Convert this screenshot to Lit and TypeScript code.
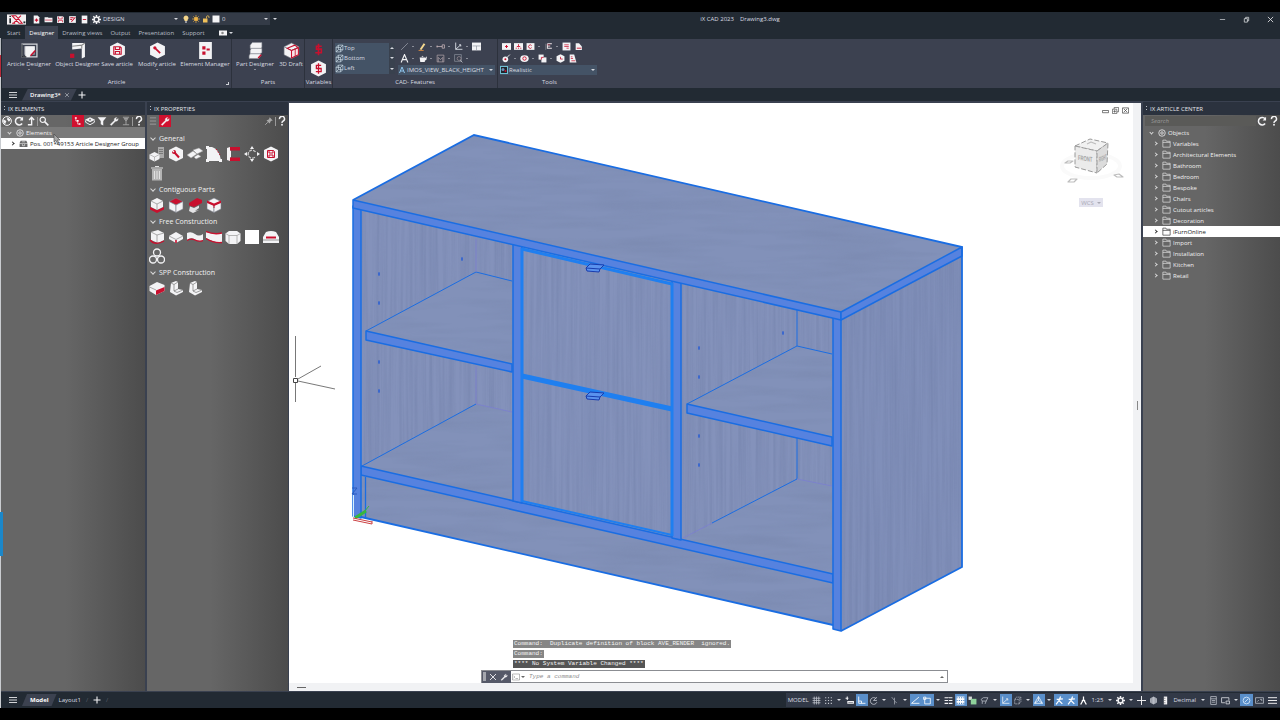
import { LitElement, html, svg, css, SVGTemplateResult, TemplateResult } from "lit";
import { customElement, property } from "lit/decorators.js";
import { classMap } from "lit/directives/class-map.js";

const RED = "#c8102e";
const W = "#f3f3f5";

const cube = (top = W, left = W, right = W) => svg`
  <path d="M8 1L15 4.500L8 8L1 4.500Z" fill=${top} stroke="#777b85" stroke-width=".6"/>
  <path d="M1 4.500L8 8V15.500L1 12Z" fill=${left} stroke="#777b85" stroke-width=".6"/>
  <path d="M15 4.500L8 8V15.500L15 12Z" fill=${right} stroke="#777b85" stroke-width=".6"/>`;
const hex = svg`<path d="M8 .5L15 4V12L8 15.500L1 12V4Z" fill=${W}/>`;
const wrench = (c: string) => svg`<path d="M2 13.500L8.500 7C8 4.500 9.500 2.500 12.500 2.500L10.800 4.500L11.500 6L13.500 5.200L14.500 4C15 7 13 8.800 10.300 8.300L3.700 15Z" fill=${c} stroke=${c} stroke-width=".6"/>`;
const floppy = svg`<path d="M4.500 4.500H10.500L11.500 5.500V11.500H4.500Z M6 4.500V7H10V4.500 M6 11.500V9H10V11.500" fill="none" stroke=${RED} stroke-width="1"/>`;
const page = svg`<path d="M3 1H10L13 4V15H3Z" fill=${W}/>`;
const iso = svg`<path d="M2 6H10V14H2ZM6 2H14V10H6ZM2 6L6 2M10 6L14 2M10 14L14 10M2 14L6 10" fill="none" stroke="#cfe0ea" stroke-width="1.200"/>`;

const ICONS: Record<string, SVGTemplateResult> = {
  new: svg`${page}<path d="M8 6V12M5 9H11" stroke=${RED} stroke-width="2"/>`,
  open: svg`<path d="M1 4H7L8 5H15V13H1Z" fill=${W}/><path d="M2 9H14" stroke=${RED} stroke-width="1.200"/>`,
  save: svg`<path d="M2 2H12L14 4V14H2Z" fill=${W}/><path d="M4.500 3V7H11V3M4.500 13V9.500H11.500V13" fill="none" stroke=${RED} stroke-width="1.200"/>`,
  saveas: svg`<path d="M2 2H14V14H2Z" fill=${W}/><path d="M4 5H10M4 8H7M6 12L13 4" stroke=${RED} stroke-width="1.800"/>`,
  plot: svg`<path d="M3 1H13V15H3Z" fill=${W}/><path d="M5 8H11" stroke=${RED} stroke-width="1.600"/>`,
  gear: svg`<path d="M8 0V16M0 8H16M2.300 2.300L13.700 13.700M13.700 2.300L2.300 13.700" stroke=${W} stroke-width="2.600"/><circle cx="8" cy="8" r="4.200" fill="#3b414c" stroke=${W} stroke-width="2.600"/>`,
  bulb: svg`<path d="M8 1A5 5 0 0 1 11 10V12H5V10A5 5 0 0 1 8 1Z" fill="#f4d58b"/><path d="M6 14H10" stroke=${W} stroke-width="2"/>`,
  sun: svg`<circle cx="8" cy="8" r="4" fill="#efb548"/><path d="M8 0V16M0 8H16M2.500 2.500L13.500 13.500M13.500 2.500L2.500 13.500" stroke="#efb548" stroke-width="1.300"/>`,
  lock: svg`<path d="M2 7H11V15H2Z" fill="#f0c15a"/><path d="M9 7V4A2.500 2.500 0 0 1 14 4V6" fill="none" stroke="#f0c15a" stroke-width="1.600"/>`,
  square: svg`<path d="M1 1H15V15H1Z" fill=${W}/>`,
  monitor: svg`<path d="M0 3H16V13H0Z" fill=${W}/><circle cx="7" cy="8" r="2.500" fill="#888"/>`,
  articleDesigner: svg`<path d="M1 2H15V14H1Z" fill="none" stroke="#d5d7dc" stroke-width="1.200"/><path d="M3 4H13V12H3Z" fill="#9a9da6"/><path d="M4 4H13V8L8 14H4Z" fill=${W}/><path d="M9 13L13.500 8" stroke=${RED} stroke-width="1.400"/><path d="M1 2V14H5" stroke="#1b1f26" fill="none"/>`,
  objectDesigner: svg`<path d="M3 1H15V14L12 15.500V6L3 7Z" fill=${W}/><path d="M3 4L12 3V6M12 3L15 1" fill="none" stroke="#888"/><path d="M1 11H5V15H1Z" fill=${RED}/>`,
  saveArticle: svg`${hex}${floppy}`,
  modify: svg`${hex}<path d="M5.500 5.500L10.500 10.500" stroke=${RED} stroke-width="1.600"/><circle cx="5.500" cy="5.500" r="1.500" fill=${RED}/>`,
  manager: svg`<path d="M2 0H14V16H2Z" fill=${W}/><path d="M5 4H8V7H5ZM5 9H8V12H5ZM9 6H12V8H9Z" fill=${RED}/>`,
  partDesigner: svg`<path d="M5 .5H14V5L13 6H3V3ZM4 6H14V10L12 11H3V8ZM3 11H13V13L11 15.500H2V13Z" fill=${W} stroke="#8a8d96" stroke-width=".5"/><path d="M10.500 15L13.500 12" stroke=${RED} stroke-width="1.400"/>`,
  draft: svg`${cube(W, W, "#f6e4e7")}<path d="M8 8L14.500 5.500V12L8 15ZM8 8L4 6L11 3L14.500 5.500" fill="none" stroke=${RED}/><path d="M11.500 6.500V13.500" stroke=${RED} stroke-width=".8"/>`,
  iso,
  line: svg`<path d="M2 14L14 2" stroke="#b9bdc7"/>`,
  pencil: svg`<path d="M3 13L10 2L13 4L6 14Z" fill="#f5d98f"/><path d="M1 15H10" stroke="#e28c3c" stroke-width="1.500"/>`,
  dim: svg`<path d="M1 8H11M2 6V10M11 5V11H15V5Z" stroke="#cdb9bd" fill="none" stroke-width="1.300"/>`,
  ucs: svg`<path d="M3 1V13H15M3 13L12 5M9 5H12V8" fill="none" stroke="#e4e8ef" stroke-width="1.500"/>`,
  table: svg`<path d="M0 1H16V15H0Z" fill=${W}/><path d="M1 7H15M8 7V15" stroke="#8e929c" stroke-width="1.200"/>`,
  letterA: svg`<path d="M2 15L8 1L14 15M4.500 10H11.500" fill="none" stroke=${W} stroke-width="2"/>`,
  teapot: svg`<path d="M3 6H13L12 14H4ZM13 7L16 4L15 10L12 12M3 8L0 6M6 5L8 3L10 5Z" fill=${W}/>`,
  render: svg`<path d="M2 2H14V14H2ZM4 14V6L8 10L12 6V14" fill="none" stroke="#b7a9ad" stroke-width="1.200"/>`,
  find: svg`<path d="M1 1H13V13H1Z" fill="none" stroke="#9fa4ae"/><circle cx="9" cy="8" r="3.500" fill="#3c414f" stroke="#b2a3a8"/><path d="M11 11L15 15" stroke=${W}/>`,
  tool1: svg`<path d="M0 2H16V14H0Z" fill=${W}/><path d="M8 5.500V10.500M5.500 8H10.500" stroke=${RED} stroke-width="1.800"/>`,
  tool2: svg`<path d="M0 2H16V14H0Z" fill=${W}/><path d="M8 4V7M3 11H5M7 11H9M11 11H13M5 8H11" stroke=${RED} stroke-width="1.600" fill="none"/>`,
  tool3: svg`<path d="M1 2H15V14H1Z" fill=${W}/><path d="M10 6.500A3 3 0 1 0 10 10" stroke=${RED} stroke-width="1.500" fill="none"/>`,
  tool4: svg`<path d="M3 3V14" stroke="#8e929c"/><path d="M6 3H14M6 7H11M6 11H14M6 3V12" stroke="#eee6ea" stroke-width="1.800" fill="none"/><path d="M6 5H11" stroke=${RED}/>`,
  tool5: svg`<path d="M1 1H15V15H1Z" fill=${W}/><path d="M4 5H12M4 8H12M8 11H12" stroke=${RED} stroke-width="1.300"/>`,
  tool6: svg`<path d="M3 2H9L14 8V14H3Z" fill=${W}/><path d="M5 11H13" stroke=${RED} stroke-width="1.600"/>`,
  bomb: svg`<circle cx="6" cy="9.500" r="5" fill=${W}/><circle cx="6" cy="9.500" r="1.800" fill=${RED}/><path d="M9 6L14 1" stroke=${W} stroke-width="1.600"/>`,
  eye: svg`<ellipse cx="8" cy="8" rx="7.500" ry="6" fill=${W}/><circle cx="8" cy="8" r="3" fill="none" stroke=${RED} stroke-width="1.600"/>`,
  copy: svg`<path d="M1 1H10V10H1Z" fill=${W}/><path d="M6 6H15V15H6Z" fill=${W}/><path d="M6 10V6H10" stroke=${RED} stroke-width="1.500" fill="none"/>`,
  clock: svg`${hex}<path d="M8 5V9H12" stroke=${RED} stroke-width="1.400" fill="none"/>`,
  sheet: svg`<path d="M3 1H11L15 15H3Z" fill=${W}/><path d="M5 5H8M5 8H9M6 12H13" stroke=${RED} stroke-width="1.300"/>`,
  realistic: svg`<path d="M0 0H16V16H0Z" fill="#6fc0d4"/><path d="M2 2H14V14H2Z" fill="#20252c"/><circle cx="6" cy="7" r="3" fill="#6d8fb8"/><circle cx="11" cy="10" r="2" fill=${RED}/>`,
  letterBlue: svg`<path d="M3 14L8 2L13 14M5 10H11" fill="none" stroke="#8fc6ee" stroke-width="2"/>`,
  globe: svg`<circle cx="8" cy="8" r="7" fill="none" stroke=${W} stroke-width="1.600"/><path d="M2 5L7 8L5 13L2 10ZM9 2L14 6L11 9L8 5Z" fill=${W}/>`,
  refresh: svg`<path d="M13 4.500A6 6 0 1 0 13 12" fill="none" stroke=${W} stroke-width="2.400"/><path d="M14.500 1V7H9Z" fill=${W}/>`,
  levelUp: svg`<path d="M3 14H9V3M5 6.500L9 2L13 6.500" fill="none" stroke=${W} stroke-width="2.200"/>`,
  search: svg`<circle cx="6" cy="6" r="4.300" fill="none" stroke=${W} stroke-width="1.800"/><path d="M9 9L15 15" stroke=${W} stroke-width="2.400"/>`,
  chain: svg`<path d="M3 2H6V4.500H3ZM6 6.500H9V9H6ZM9 11.500H12V14H9Z" fill="#fff"/><path d="M4.500 4V8H7M7.500 9V13H9" fill="none" stroke="#fff"/>`,
  layers: svg`<path d="M8 2L16 6L8 10L0 6Z" fill=${W}/><path d="M1 7V10L8 14L15 10V7" fill="none" stroke=${W} stroke-width="1.500"/><circle cx="8" cy="6" r="1.500" fill="#777"/>`,
  funnel: svg`<path d="M1 2H15L10 8V15L6 13V8Z" fill=${W}/>`,
  wrench: wrench(W),
  press: svg`<path d="M3 2H13M5 4H11L8 8ZM8 8V14M3 14H13" stroke="#a2a2a2" stroke-width="1.500" fill="#8a8a8a"/>`,
  help: svg`<path d="M4 5A4 4 0 1 1 9.500 8.300Q8 9 8 11" fill="none" stroke=${W} stroke-width="2.400"/><circle cx="8" cy="14" r="1.500" fill=${W}/>`,
  list: svg`<path d="M3 3H13M3 8H13M3 13H13" stroke="#999" stroke-width="1.600"/>`,
  pin: svg`<path d="M9 2L14 7L11 8L9 12L4 7L8 5Z" fill="#a9a9a9"/><path d="M6 10L2 14" stroke="#a9a9a9" stroke-width="1.500"/>`,
  gDuplicate: svg`<path d="M9 1H15V12H9Z" fill="#a9a9a9"/><path d="M10 3.500H14M10 5.500H14M10 7.500H14" stroke="#666" stroke-width=".7"/><path d="M5.500 6L10.500 8.500V13L5.500 15.500L.5 13V8.500Z" fill=${W}/><path d="M.5 8.500L5.500 11L10.500 8.500M5.500 11V15" stroke="#999" stroke-width=".6" fill="none"/>`,
  gWrench: svg`${hex}<path d="M11 11.500L6.500 6.500" stroke=${RED} stroke-width="2"/><circle cx="6" cy="6" r="2" fill=${RED}/><path d="M4 4L6 6" stroke=${W} stroke-width="1.300"/>`,
  gSheets: svg`<path d="M0 9L6 5L10 8L4 12ZM6 4L12 2L16 5L10 8ZM7 11L11 8.500L14 10.500L9 13Z" fill=${W} stroke="#999" stroke-width=".5"/>`,
  gCurve: svg`<path d="M1 1H6C12 3 14 8 15 15H1Z" fill=${W}/><path d="M10 3L14 9" stroke=${RED} stroke-dasharray="1.500 1.500"/><path d="M0 0H3V3H0ZM0 13H3V16H0ZM13 13H16V16H13Z" fill=${W}/>`,
  gChannel: svg`<path d="M4 1H15V4.500H4ZM4 11.500H15V15H4Z" fill=${RED}/><path d="M2 2L5 1V4.500L6 5V11L5 11.500V15L2 14Z" fill=${W}/>`,
  gRotate: svg`<path d="M8 0L10 3H6ZM8 16L10 13H6ZM0 8L3 6V10ZM16 8L13 6V10Z" fill=${W}/><path d="M11.500 6A4 4 0 1 0 11 11" stroke="#ccc" stroke-width="1.300" fill="none" stroke-dasharray="3 1"/>`,
  gSave: svg`${hex}${floppy}`,
  gTrash: svg`<path d="M3 4H13V15.500H3Z" fill="#b4b4b4"/><path d="M2 3H14M6 1.500H10M5.500 6V14M8 6V14M10.500 6V14" stroke="#e2e2e2" stroke-width="1"/>`,
  cBase: svg`<path d="M1 10V12.500L8 16L15 12.500V10L8 13Z" fill=${RED}/><path d="M8 1L14 4V10L8 13L2 10V4Z" fill=${W}/><path d="M2 4L8 7L14 4M8 7V13" fill="none" stroke="#888" stroke-width=".7"/>`,
  cTop: svg`${cube(RED)}`,
  cShelf: svg`<path d="M2 6L10 1L15 3V6L7 10L2 8.500Z" fill=${RED}/><path d="M3 9.500L7 11L12 8.500V11L8 14L12 13L6 16L2 14Z" fill="#e4e4e6"/>`,
  cCorner: svg`${cube(W, W, W)}<path d="M1 3.500L8 6.500L15 3.500V6L8 9L1 6Z" fill=${RED}/><path d="M8 8V11" stroke=${RED}/>`,
  fBox: svg`<path d="M2 3L9 1L15 4V11L9 14L2 11Z" fill=${W}/><path d="M2 3L8 6L15 4M8 6V13" fill="none" stroke="#888" stroke-width=".7"/><path d="M1 11Q6 17 15 12" stroke=${RED} fill="none" stroke-width="1.400"/>`,
  fBoard: svg`<path d="M8 3L15 7V10L8 14L1 10V7Z" fill=${W}/><path d="M1 7L8 10.500L15 7" fill="none" stroke="#888" stroke-width=".7"/><path d="M8 11V14" stroke=${RED} stroke-width="1.600"/>`,
  fWave: svg`<path d="M0 4Q4 2 8 5T16 5V11Q12 13 8 10.500T0 11Z" fill=${W}/><path d="M0 11.500Q4 9 8 11T16 11.500" fill="none" stroke=${RED} stroke-width="1.200"/>`,
  fBow: svg`<path d="M0 3Q8 6 16 4V13Q8 14 0 9Z" fill=${W}/><path d="M0 2.500Q8 6 16 4M0 9.500Q8 14.500 16 13.500" fill="none" stroke=${RED} stroke-width="1.400"/>`,
  fPrism: svg`<path d="M4 2H12L15.500 4.500V12L12 15H4L.5 12V4.500Z" fill=${W}/><path d="M.5 4.500L4 6.500H12L15.500 4.500M4 6.500V15M12 6.500V15" fill="none" stroke="#999" stroke-width=".7"/>`,
  fSquare: svg`<path d="M1 1H15V15H1Z" fill="#fff"/>`,
  fProfile: svg`<path d="M3 3Q8 1 13 3L16 8V14H0V8Z" fill=${W}/><path d="M3 8.500H13" stroke=${RED} stroke-width="2"/><path d="M0 11H16" stroke="#999"/>`,
  fRings: svg`<g fill="none" stroke=${W} stroke-width="1.300"><circle cx="8" cy="4.500" r="3.500"/><circle cx="4" cy="11.500" r="3.500"/><circle cx="12" cy="11.500" r="3.500"/></g>`,
  sDrawer: svg`<path d="M8 2L15.500 5V11L7 15L.5 11V6Z" fill=${W}/><path d="M7 10.500L15.500 7V11L7 15Z" fill=${RED}/><path d="M.5 7L7 10" stroke="#888" stroke-width=".7"/>`,
  sL: svg`<path d="M3 3L8 1L10 2V9L15 10V12L8 15.500L2 12Z" fill=${W}/><path d="M3 3L6 4.500V11L9 12.500L15 10M6 11L10 9M6 4.500L10 2" fill="none" stroke="#777" stroke-width=".7"/>`,
  root: svg`<circle cx="8" cy="8" r="6.500" fill="none" stroke=${W} stroke-width="1.500"/><circle cx="8" cy="8" r="2.500" fill="none" stroke=${W} stroke-width="1.500"/>`,
  group: svg`<path d="M1 7L3 3H13L15 7H1ZM1 8H15V14H1Z" fill="#696969"/><path d="M5 5H11M6 9V12H10V9" stroke="#fff" fill="none"/>`,
  folder: svg`<path d="M1.500 2H7L8 4H14.500V14.500H1.500ZM1.500 6H14.500" fill="none" stroke="currentColor" stroke-width="1.100"/>`,
  menu: svg`<path d="M0 3H16M0 8H16M0 13H16" stroke=${W} stroke-width="1.700"/>`,
  plus: svg`<path d="M8 1V15M1 8H15" stroke=${W} stroke-width="2.200"/>`,
  close: svg`<path d="M3 3L13 13M13 3L3 13" stroke="#cfd2d8" stroke-width="1.500"/>`,
  min: svg`<path d="M2 8H14" stroke="#d5d8dd" stroke-width="1.600"/>`,
  restore: svg`<path d="M3 6H10V14H3ZM6 6V3H13V11H10" fill="none" stroke="#e0e2e6" stroke-width="1.700"/>`,
  x: svg`<path d="M2 2L14 14M14 2L2 14" stroke="#e8e8ec" stroke-width="1.900"/>`,
  grid: svg`<path d="M1 4H15M1 8H15M1 12H15M4 1V15M8 1V15M12 1V15" stroke="#c6cad2" stroke-width="1.300"/>`,
  dots: svg`<path d="M2 3H15M2 8H15M2 13H15" stroke="#c6cad2" stroke-width="2" stroke-dasharray="2 3"/>`,
  infer: svg`<path d="M1 4H6M4 1V7M5 10H15V13H5Z" stroke=${W} stroke-width="1.800" fill="none"/>`,
  ortho: svg`<path d="M3 1V13H15M3 9H8V13" stroke="#fff" stroke-width="1.500" fill="none"/>`,
  polar: svg`<path d="M13 5A6 6 0 1 0 14 11M8 8L14 2M8 8H14" stroke="#c6cad2" stroke-width="1.400" fill="none"/>`,
  isod: svg`<path d="M8 3V15M8 8L3 2M8 9L12 12" stroke="#9a9faa" stroke-width="1.500"/>`,
  angle: svg`<path d="M15 13H1L14 2" fill="none" stroke="#fff" stroke-width="1.500"/>`,
  osnap: svg`<path d="M3 4H13V14H3ZM1 2H5V6H1Z" fill="none" stroke="#fff" stroke-width="1.400"/>`,
  lwt: svg`<path d="M1 3H15M1 8H15M1 13H15" stroke=${W} stroke-width="2"/><path d="M8 3V14" stroke="#3a404d" stroke-width="1.500"/>`,
  checker: svg`<path d="M1 1H15V15H1Z" fill="#fff"/><path d="M1 3H15M1 8H15M1 13H15" stroke="#4f82bd" stroke-width="2" stroke-dasharray="2 2"/>`,
  cycle: svg`<path d="M1 1H7V7H1Z" fill="#d8dad8"/><path d="M5 5H15V15H5Z" fill="#8fd19b"/>`,
  gizmo: svg`<path d="M2 6L6 3H14L11 9H4ZM4 9V14M11 9L9 14" fill="none" stroke="#b9bec8" stroke-width="1.400"/>`,
  box3: svg`<path d="M3 6H11V14H3ZM3 6L6 2H14V10L11 14M11 6L14 2" fill="none" stroke="#b9bec8" stroke-width="1.200" stroke-dasharray="3 1"/>`,
  tri: svg`<path d="M8 1L15 13H1ZM8 1V8L1 13M8 8L15 13" fill="none" stroke="#fff" stroke-width="1.300"/>`,
  person: svg`<path d="M8 1V7M8 6L3 15M8 6L13 15M5 8H11" stroke="#fff" stroke-width="2.200" fill="none"/>`,
  runner: svg`<path d="M10 1L7 8L2 15M7 8L13 14M3 6L14 5" stroke="#fff" stroke-width="2.200" fill="none"/>`,
  cross: svg`<path d="M8 0V16M0 8H16" stroke=${W} stroke-width="1.700"/>`,
  hw: svg`<path d="M8 1L14 4.500V11.500L8 15L2 11.500V4.500Z" fill="#b8bcc5"/><path d="M5 2V14M11 2V14" stroke="#737984"/>`,
  ruler: svg`<path d="M5 1H11V15H5Z" fill=${W}/><path d="M5 4H8M5 8H8M5 12H8" stroke="#555"/>`,
  calc: svg`<path d="M3 1H13V15H3ZM3 5H13M5 8H11M5 11H11" stroke="#c6cad2" fill="none" stroke-width="1.300"/>`,
  ui: svg`<path d="M1 3H14V8M1 3V12H7M9 9H15V14H9Z" fill="none" stroke="#d3d6dc" stroke-width="1.500"/>`,
  clean: svg`<circle cx="8" cy="8" r="6" fill="none" stroke="#cfe3f8" stroke-width="1.600"/><path d="M5 11L11 5" stroke="#cfe3f8" stroke-width="1.600"/>`,
  screen: svg`<path d="M1 3H15V13H1ZM4 10L7 7M9 6H12V9" fill="none" stroke="#c6cad2" stroke-width="1.300"/>`,
  logo: svg`<path d="M0 0H30V16H0Z" fill="#f4f1f2"/><path d="M5 6V14M5 2V4" stroke="#23262c" stroke-width="2.500"/><path d="M8 2H14L24 14H19L8 2ZM22 2L10 14M8 14H13" fill="none" stroke=${RED} stroke-width="1.600"/><path d="M26 11H29V14H26Z" fill="#23262c"/>`,
  dollar: svg`<path d="M12 4H5.500V7.500H11.500V12H4M8 1V15" fill="none" stroke=${RED} stroke-width="2"/>`,
  dollarCube: svg`${hex}<path d="M10.500 5H6V8H10.500V11H5.500M8 3V13" fill="none" stroke=${RED} stroke-width="1.200"/>`,
  prompt: svg`<path d="M1 2H15V14H1ZM3 6L6 8L3 10M7 11H12" fill="none" stroke="#777"/>`,
  vMin: svg`<path d="M1 8H15V13H1Z" fill="none" stroke="#444" stroke-width="1.600"/>`,
  vMax: svg`<path d="M1 5H11V15H1ZM5 5V1H15V11H11M6 7V13M3 10H9" fill="none" stroke="#444" stroke-width="1.500"/>`,
  vClose: svg`<path d="M1 2H15V14H1ZM4 4L12 12M12 4L4 12" fill="none" stroke="#444" stroke-width="1.600"/>`,
};

@customElement("ix-icon")
class IxIcon extends LitElement {
  @property() name = "";
  static styles = css`
    :host { display: inline-flex; flex: none; width: var(--s, 10px); height: var(--s, 10px); }
    :host([wide]) { width: 19px; }
    svg { width: 100%; height: 100%; display: block; }
  `;
  render() {
    return html`<svg viewBox=${this.name === "logo" ? "0 0 30 16" : "0 0 16 16"} aria-hidden="true">${ICONS[this.name]}</svg>`;
  }
}

const shared = css`
  * { box-sizing: border-box; }
  button, select, input { font: inherit; color: inherit; background: none; border: 0; padding: 0; margin: 0; border-radius: 0; outline: none; }
  button { display: inline-flex; align-items: center; justify-content: center; white-space: nowrap; cursor: pointer; }
  select { appearance: none; }
  h2, h3, ul { margin: 0; padding: 0; font-size: inherit; font-weight: inherit; list-style: none; }
  .caret { width: 0; height: 0; border: 2px solid transparent; border-top-color: #d5d8de; border-bottom: 0; flex: none; }
  .caret.up { transform: rotate(180deg); }
`;

const btn = (icon: string, cls = "") => html`<button class=${"ib " + cls} aria-label=${icon}><ix-icon name=${icon}></ix-icon></button>`;

@customElement("ix-ribbon")
class IxRibbon extends LitElement {
  static styles = [shared, css`
    :host { display: block; background: #222a33; color: #d9dce1; }
    .title { display: grid; grid-template-columns: 7fr auto 5fr; align-items: center; height: 14px; }
    .quick { display: flex; align-items: center; padding-left: 7px; --s: 9px; }
    .quick .logo { --s: 11px; margin-right: 4px; }
    .quick .ib { width: 12px; height: 13px; }
    .combo { display: flex; align-items: center; background: #343b47; height: 12px; gap: 2px; padding: 0 2px; }
    .combo select { flex: 1; min-width: 0; height: 12px; }
    .workspace { width: 90px; }
    .layer { width: 90px; margin: 0 3px 0 0; --s: 8px; }
    .caption { display: flex; gap: 6px; }
    .win { display: flex; justify-content: flex-end; gap: 4px; --s: 7px; }
    .win .ib { width: 20px; height: 14px; }
    .tabs { display: flex; height: 13px; align-items: stretch; padding-left: 3px; color: #b9bec6; }
    .tabs button { padding: 0 4px; }
    .tabs .active { background: #3c4250; color: #fff; margin-left: 1px; }
    .tabs .disp { --s: 8px; gap: 2px; margin-left: 6px; }
    .body { display: flex; height: 49px; background: #3c4150; margin-left: 2px; }
    .grp { display: flex; flex-direction: column; border-right: 1px solid #2c313c; }
    .items { display: flex; height: 38px; }
    .foot { height: 11px; line-height: 10px; text-align: center; position: relative; }
    .launch { position: absolute; right: 2px; bottom: 3px; width: 3px; height: 3px; border: solid #cfd2d8; border-width: 0 1px 1px 0; }
    .big { flex-direction: column; justify-content: flex-start; padding-top: 3px; line-height: 8px; gap: 1px; --s: 17px; }
    .article { width: 230px; }
    .article .items { display: grid; grid-template-columns: 54px 43px 36px 44px 52px; }
    .parts { width: 73px; }
    .parts .items { display: grid; grid-template-columns: 46px 26px; }
    .vars { width: 28px; }
    .vars .items { flex-direction: column; align-items: center; gap: 4px; padding-top: 4px; --s: 17px; }
    .vars .small { --s: 13px; }
    .cad { width: 165px; }
    .cad .items { padding: 4px 2px 0 2px; gap: 3px; }
    .views { display: flex; width: 60px; height: 31px; background: #445366; }
    .views ul { flex: 1; }
    .views li { display: flex; align-items: center; height: 10px; --s: 9px; }
    .scroll { width: 6px; display: flex; flex-direction: column; justify-content: space-around; align-items: center; background: #39414e; }
    .tools { flex: 1; display: flex; flex-direction: column; }
    .row { display: flex; align-items: center; height: 12px; --s: 9px; }
    .row .ib { width: 12px; height: 12px; }
    .drop { width: 6px; display: flex; justify-content: center; }
    .row .caret, .big .caret { border-width: 1px; border-bottom: 0; }
    .style { background: #445366; height: 10px; width: 97px; --s: 8px; margin-top: 1px; gap: 1px; padding: 0 2px 0 0; }
    .style select { height: 10px; }
    .last { width: 103px; border: 0; }
    .last .items { padding: 1px 0 0 2px; }
    .cad .tools { margin-top: -3px; }
    .docs { display: flex; align-items: center; height: 13px; --s: 8px; padding-left: 8px; }
    .docs .tab { background: #3c4250; height: 12px; clip-path: polygon(6px 0, 100% 0, calc(100% - 6px) 100%, 0 100%); padding: 0 7px 0 8px; margin: 0 0 0 4px; display: flex; align-items: center; gap: 3px; font-weight: 600; color: #fff; --s: 6px; }
    .docs .ib { width: 10px; height: 10px; }
  `];

  private big(icon: string, label: string, drop = false) {
    return html`<button class="big"><ix-icon name=${icon}></ix-icon><span>${label}</span>${drop ? html`<span class="drop"><span class="caret"></span></span>` : ""}</button>`;
  }
  private row(names: string[]): TemplateResult[] {
    return names.map((n) => (n === "v" ? html`<span class="drop"><span class="caret"></span></span>` : btn(n)));
  }
  render() {
    return html`
      <header class="title">
        <div class="quick">
          <ix-icon class="logo" name="logo" wide></ix-icon>
          ${["new", "open", "save", "saveas", "plot"].map((n) => btn(n))}
          <div class="combo workspace"><ix-icon name="gear"></ix-icon><select aria-label="Workspace"><option>DESIGN</option></select><span class="caret"></span></div>
          <div class="combo layer">${["bulb", "sun", "lock", "square"].map((n) => html`<ix-icon name=${n}></ix-icon>`)}<select aria-label="Layer"><option>0</option></select><span class="caret"></span></div>
          <span class="caret"></span>
        </div>
        <div class="caption"><span>iX CAD 2023</span><span>Drawing3.dwg</span></div>
        <div class="win">${["min", "restore", "x"].map((n) => btn(n))}</div>
      </header>
      <nav class="tabs">
        ${["Start", "Designer", "Drawing views", "Output", "Presentation", "Support"].map(
          (t) => html`<button class=${classMap({ active: t === "Designer" })}>${t}</button>`)}
        <button class="disp" aria-label="Display"><ix-icon name="monitor"></ix-icon><span class="caret"></span></button>
      </nav>
      <div class="body">
        <section class="grp article">
          <div class="items">
            ${this.big("articleDesigner", "Article Designer", true)}${this.big("objectDesigner", "Object Designer")}
            ${this.big("saveArticle", "Save article")}${this.big("modify", "Modify article", true)}${this.big("manager", "Element Manager")}
          </div>
          <div class="foot">Article<span class="launch"></span></div>
        </section>
        <section class="grp parts">
          <div class="items">${this.big("partDesigner", "Part Designer", true)}${this.big("draft", "3D Draft")}</div>
          <div class="foot">Parts</div>
        </section>
        <section class="grp vars">
          <div class="items"><ix-icon class="small" name="dollar"></ix-icon><ix-icon name="dollarCube"></ix-icon></div>
          <div class="foot">Variables</div>
        </section>
        <section class="grp cad">
          <div class="items">
            <div class="views">
              <ul>${["Top", "Bottom", "Left"].map((v) => html`<li><ix-icon name="iso"></ix-icon>${v}</li>`)}</ul>
              <div class="scroll"><span class="caret up"></span><span class="caret"></span><span class="caret"></span></div>
            </div>
            <div class="tools">
              <div class="row">${this.row(["line", "v", "pencil", "v", "dim", "v", "ucs", "v", "table"])}</div>
              <div class="row">${this.row(["letterA", "v", "teapot", "v", "render", "v", "find", "v"])}</div>
              <div class="combo style"><ix-icon name="letterBlue"></ix-icon><select aria-label="Text style"><option>IMOS_VIEW_BLACK_HEIGHT</option></select><span class="caret"></span></div>
            </div>
          </div>
          <div class="foot">CAD- Features</div>
        </section>
        <section class="grp last">
          <div class="items"><div class="tools">
            <div class="row">${this.row(["tool1", "tool2", "tool3", "v", "tool4", "v", "tool5", "tool6"])}</div>
            <div class="row">${this.row(["bomb", "v", "eye", "v", "copy", "v", "clock", "sheet"])}</div>
            <div class="combo style"><ix-icon name="realistic"></ix-icon><select aria-label="Visual style"><option>Realistic</option></select><span class="caret"></span></div>
          </div></div>
          <div class="foot">Tools</div>
        </section>
      </div>
      <div class="docs">${btn("menu")}<span class="tab">Drawing3*<ix-icon name="close"></ix-icon></span>${btn("plus")}</div>
    `;
  }
}

const panel = css`
  :host { display: flex; flex-direction: column; color: #f1f1f1; background: linear-gradient(90deg, #666 0 45%, #4c4c4c 100%); }
  .head { height: 13px; background: #2b323e; display: flex; align-items: center; gap: 3px; padding-left: 3px; color: #e3e5e9; }
  .grip { width: 1px; height: 6px; background: repeating-linear-gradient(#b9bdc5 0 1px, transparent 1px 3px); }
  .bar { display: flex; align-items: center; height: 12px; --s: 10px; }
  .bar .ib { width: 12px; height: 12px; }
  .bar .on { background: #d0112f; }
  .sp { flex: 1; }
  .sep { width: 1px; height: 9px; background: #999; }
  .node { display: flex; align-items: center; height: 11px; white-space: nowrap; gap: 2px; --s: 9px; width: 100%; justify-content: flex-start; }
  .root { padding-left: 7px; --s: 8px; }
  .tw { width: 3px; height: 3px; border: solid #d8d8d8; border-width: 0 1px 1px 0; transform: rotate(-45deg); flex: none; margin-right: 3px; }
  .tw.open { transform: rotate(45deg); }
  .sel { background: #fff; color: #222; }
  .sel .tw { border-color: #333; }
`;

@customElement("ix-elements")
class IxElements extends LitElement {
  static styles = [shared, panel, css`
    :host { position: relative; }
    .hover { background: #7a7a7a; }
    .child { padding-left: 10px; }
    .pointer { position: absolute; left: 52px; top: 32px; width: 8px; height: 10px; }
  `];
  render() {
    return html`
      <h2 class="head"><span class="grip"></span>IX ELEMENTS</h2>
      <div class="bar">${btn("globe")}${btn("refresh")}${btn("levelUp")}<span class="sep"></span>${btn("search")}<span class="sp"></span>
        ${btn("chain", "on")}${btn("layers")}${btn("funnel")}${btn("wrench")}${btn("press")}<span class="sep"></span>${btn("help")}</div>
      <button class="node root hover"><span class="tw open"></span><ix-icon name="root"></ix-icon>Elements</button>
      <button class="node child sel"><span class="tw"></span><ix-icon name="group"></ix-icon>Pos. 001*49153 Article Designer Group</button>
      <svg class="pointer" viewBox="0 0 8 10"><path d="M1 0V8L3 6.500L4.500 9.500L5.800 9L4.500 6H7Z" fill="#aaa" stroke="#444" stroke-width=".6"/></svg>
    `;
  }
}

const SECTIONS: [string, string[]][] = [
  ["General", ["gDuplicate", "gWrench", "gSheets", "gCurve", "gChannel", "gRotate", "gSave", "gTrash"]],
  ["Contiguous Parts", ["cBase", "cTop", "cShelf", "cCorner"]],
  ["Free Construction", ["fBox", "fBoard", "fWave", "fBow", "fPrism", "fSquare", "fProfile", "fRings"]],
  ["SPP Construction", ["sDrawer", "sL", "sL"]],
];

@customElement("ix-properties")
class IxProperties extends LitElement {
  static styles = [shared, panel, css`
    .body { display: flex; flex-direction: column; gap: 1px; padding-top: 6px; }
    h3 { display: flex; align-items: center; height: 12px; font-size: 7px; padding-left: 4px; gap: 4px; }
    h3 .tw { width: 4px; height: 4px; margin: 0 0 2px; }
    .icons { display: grid; grid-template-columns: repeat(7, 19px); --s: 16px; }
    .icons .ib { height: 19px; padding-bottom: 2px; }
  `];
  render() {
    return html`
      <h2 class="head"><span class="grip"></span>IX PROPERTIES</h2>
      <div class="bar">${btn("list")}${btn("wrench", "on")}<span class="sp"></span>${btn("pin")}<span class="sep"></span>${btn("help")}</div>
      <div class="body">${SECTIONS.map(([t, icons]) => html`<section><h3><span class="tw open"></span>${t}</h3><div class="icons">${icons.map((n) => btn(n))}</div></section>`)}</div>
    `;
  }
}

const FOLDERS = ["Variables", "Architectural Elements", "Bathroom", "Bedroom", "Bespoke", "Chairs", "Cutout articles", "Decoration", "iFurnOnline", "Import", "Installation", "Kitchen", "Retail"];

@customElement("ix-articles")
class IxArticles extends LitElement {
  static styles = [shared, panel, css`
    input { flex: 1; min-width: 0; height: 10px; padding-left: 6px; margin-left: 2px; background: #5a5a58; }
    input::placeholder { color: #999; font-style: italic; opacity: 1; }
    .child { padding-left: 11px; }
  `];
  render() {
    return html`
      <h2 class="head"><span class="grip"></span>IX ARTICLE CENTER</h2>
      <div class="bar"><input aria-label="Search" placeholder="Search" />${btn("refresh")}${btn("help")}</div>
      <button class="node root"><span class="tw open"></span><ix-icon name="root"></ix-icon>Objects</button>
      ${FOLDERS.map((f) => html`<button class=${classMap({ node: true, child: true, sel: f === "iFurnOnline" })}><span class="tw"></span><ix-icon name="folder"></ix-icon>${f}</button>`)}
    `;
  }
}

const PEGS = [[379, 274], [379, 303], [462, 259], [379, 362], [379, 391], [699, 348], [699, 377], [783, 333], [699, 436], [699, 465]];

@customElement("ix-canvas")
class IxCanvas extends LitElement {
  static styles = [shared, css`
    :host { display: grid; position: relative; grid-template: minmax(0, 1fr) 8px / minmax(0, 1fr) 8px; background: #fff; overflow: hidden; }
    .scene { width: 100%; height: 100%; display: block; }
    .v, .h { background: #f1f2f4; display: flex; }
    .v { align-items: center; justify-content: center; grid-row: 1 / 3; grid-column: 2; }
    .v::after { content: ""; width: 1px; height: 9px; background: #888; margin-top: 16px; }
    .h { grid-row: 2; padding: 4px 8px; }
    .h::after { content: ""; width: 9px; height: 1px; background: #666; }
    .view { position: absolute; top: 3px; right: 12px; display: flex; --s: 7px; gap: 2px; }
    .view .ib { width: 8px; height: 8px; }
    .face { font: 700 7px "Liberation Sans", sans-serif; fill: #a3a3a3; }
    .cube { stroke: #9a9a9a; stroke-dasharray: 5 2; stroke-width: 1; }
    .wcs { position: absolute; top: 95px; right: 38px; width: 24px; height: 9px; background: #e3e3ee; color: #aaaab4; gap: 3px; }
    .wcs .caret { border-top-color: #aaaab4; }
    .cmd { position: absolute; left: 192px; bottom: 8px; width: 467px; font: 6px/8px "Liberation Mono", "DejaVu Sans Mono", monospace; }
    .log { display: flex; flex-direction: column; align-items: flex-start; gap: 2px; padding: 0 0 2px 32px; color: #f4f4f4; white-space: pre; }
    .log span { background: #868686; padding: 0 1px; }
    .log span:last-child { background: #555; }
    .line { display: flex; align-items: center; height: 13px; border: 1px solid #8b8d92; background: #fff; --s: 8px; gap: 1px; padding-right: 3px; }
    .handle { display: flex; align-items: center; gap: 3px; background: #555968; height: 12px; width: 29px; padding-left: 1px; }
    .handle::before { content: ""; width: 3px; height: 9px; background: #a5a7ae; }
    .line input { flex: 1; font-style: italic; padding-left: 3px; }
    .line input::placeholder { color: #8d8d8d; opacity: 1; }
    .line .caret { border-top-color: #666; }
  `];
  render() {
    const line = "#1a6de2", edge = "#5682df", bright = "#1f7ff0";
    const handle = (y: number) => svg`<path d=${`M586 ${y + 1}L590 ${y - 3}L604 ${y - 2}L600 ${y + 2}L599 ${y + 5}L587 ${y + 4}ZM586 ${y + 1}L600 ${y + 2}`} fill="#5a92ee" stroke="#183cae"/>`;
    return html`
      <svg class="scene" viewBox="289 103 844 580" preserveAspectRatio="xMinYMin meet" role="img" aria-label="Cabinet model">
        <defs>
          <filter id="gv" x="0" y="0" width="1" height="1" color-interpolation-filters="sRGB"><feTurbulence type="fractalNoise" baseFrequency=".3 .006" numOctaves="3" seed="4"/><feColorMatrix values="0 0 0 0 .4  0 0 0 0 .46  0 0 0 0 .62  .6 0 0 0 -.2"/><feComposite in2="SourceAlpha" operator="in"/><feMerge><feMergeNode in="SourceGraphic"/><feMergeNode/></feMerge></filter>
          <filter id="gh" x="0" y="0" width="1" height="1" color-interpolation-filters="sRGB"><feTurbulence type="fractalNoise" baseFrequency=".01 .1" numOctaves="3" seed="9"/><feColorMatrix values="0 0 0 0 .42  0 0 0 0 .48  0 0 0 0 .62  .5 0 0 0 -.2"/><feComposite in2="SourceAlpha" operator="in"/><feMerge><feMergeNode in="SourceGraphic"/><feMergeNode/></feMerge></filter>
        </defs>
        <g filter="url(#gv)">
          <path d="M361 207L841 318V584L361 475Z" fill="#8492bb"/>
          <path d="M841 320L962 256V567L841 631Z" fill="#808fb9"/>
        </g>
        <g filter="url(#gh)" fill="#8291b9">
          <path d="M353 200L474 135L962 247L841 312Z"/>
          <path d="M366 331L476 272L512 281V364Z"/>
          <path d="M362 466L476 404L512 412V501Z"/>
          <path d="M687 404L797 346L832 354V437Z"/>
          <path d="M682 540L797 479L832 486V574Z"/>
          <path d="M361 475L833 583V625L361 517Z"/>
        </g>
        <g fill="none" stroke=${line} stroke-width="1">
          <path d="M366 331L476 272L512 281M362 466L476 404M687 404L797 346L832 354M797 310V346M797 438V479L712 523"/>
          <path d="M476 239V272M476 366V404L512 412M797 479L832 486M712 523L683 538" stroke="#7b7fd0" stroke-width=".8"/>
        </g>
        <g fill=${edge} stroke=${line} stroke-width="1.500" stroke-linejoin="round">
          <path d="M366 331L512 364V372L366 340Z"/>
          <path d="M687 404L832 437V446L687 413Z"/>
          <path d="M361 466L833 574V583L361 475Z"/>
          <path d="M353 206H361V518L353 516Z"/>
          <path d="M513 243H522V503L513 501Z"/>
          <path d="M672 279H681V540L672 538Z"/>
          <path d="M833 316H841V631L833 629Z"/>
          <path d="M353 200L841 312V320L353 208Z"/>
          <path d="M841 312L962 247V256L841 320Z"/>
        </g>
        <g fill="none" stroke=${line} stroke-width="1.800">
          <path d="M353 200L474 135L962 247V567L841 631"/>
          <path d="M361 517L833 625"/><path d="M365.500 477V518" stroke-width="1.300"/>
        </g>
        <g fill="none" stroke=${bright}>
          <path d="M522 249L672 284" stroke-width="3"/><path d="M522 376L672 409" stroke-width="5"/>
          <path d="M522 248V502M672 283V536" stroke-width="3"/><path d="M522 501L672 535" stroke-width="2"/>
        </g>
        ${handle(267)}${handle(395)}
        ${PEGS.map(([x, y]) => svg`<ellipse cx=${x} cy=${y} rx="1" ry="2" fill="#3565cf"/>`)}
        <g fill="none">
          <path d="M353.500 518V495" stroke="#d6f0ff"/><path d="M352 488H357L352 494H357" stroke="#2c5bbd"/>
          <path d="M355 518L366 511" stroke="#36b83c" stroke-width="3"/><path d="M364 512L369 506" stroke="#36b83c"/>
          <path d="M353 518L372 522M353 520L372 524V521" stroke="#cc4143"/>
          <path d="M295.500 336V377M295.500 383V402M298 379L321 366M298 381L335 389" stroke="#555" stroke-width=".8"/><path d="M293.500 378.500H297.500V382.500H293.500Z" stroke="#444"/>
        </g>
        <g stroke-linejoin="round">
          <ellipse cx="1091" cy="166" rx="29" ry="12" fill="none" stroke="#fafafa" stroke-width="4"/>
          <path class="cube" d="M1075 146L1090 139L1108 143L1097 151Z" fill="#f1f1f1"/>
          <path class="cube" d="M1075 146L1097 151V173L1075 167Z" fill="#ebebeb"/>
          <path class="cube" d="M1097 151L1108 143L1107 164L1097 173Z" fill="#dcdcdc"/>
          <text class="face" transform="matrix(.6 .08 0 1 1078 160)">FRONT</text>
          <text class="face" transform="matrix(.35 -.15 0 1 1099 162)">RIGHT</text>
          <path d="M1065 163L1068 161H1073L1070 163ZM1068 182L1071 179H1077L1074 182ZM1114 175L1119 174L1123 177H1117ZM1087 144L1091 142L1096 144" fill="none" stroke="#bdbdbd" stroke-width="1.200"/>
        </g>
      </svg>
      <div class="v"></div><div class="h"></div>
      <div class="view">${["vMin", "vMax", "vClose"].map((n) => btn(n))}</div>
      <button class="wcs">WCS<span class="caret"></span></button>
      <div class="cmd">
        <div class="log"><span>Command:  Duplicate definition of block AVE_RENDER  ignored.</span><span>Command:</span><span>**** No System Variable Changed ****</span></div>
        <div class="line"><span class="handle"><ix-icon name="x"></ix-icon><ix-icon name="wrench"></ix-icon></span><ix-icon name="prompt"></ix-icon><span class="caret"></span>
          <input aria-label="Command" placeholder="Type a command" /><span class="caret up"></span></div>
      </div>
    `;
  }
}

const STATUS: string[] = ["grid", "dots", "v", "infer", "*ortho", "polar", "v", "isod", "v", "*angle", "*osnap", "v", "lwt", "*checker", "cycle", "gizmo", "v", "*ucs", "box3", "v", "*tri", "v", "*runner", "*runner", "person", "=1:25", "v", "gear", "v", "cross", "hw", "ruler", "=Decimal", "v", "calc", "ui", "v", "*clean", "screen", "menu"];

@customElement("ix-status")
class IxStatus extends LitElement {
  static styles = [shared, css`
    :host { display: flex; align-items: center; justify-content: space-between; height: 16px; background: #222a33; color: #dcdfe4; --s: 8px; }
    .tabs, .tray { display: flex; align-items: center; }
    .tabs { padding-left: 7px; }
    .tabs .ib { width: 12px; height: 12px; }
    .model { background: #3c4250; color: #fff; font-weight: 700; height: 12px; padding: 0 8px; margin-left: 3px; clip-path: polygon(5px 0, 100% 0, calc(100% - 5px) 100%, 0 100%); }
    .layout { padding: 0 2px; }
    .slash { color: #5a606c; padding: 0 3px; }
    .tray { background: #323947; height: 14px; --s: 9px; padding-right: 1px; }
    .tray .ib { width: 12px; height: 12px; }
    .tray .ib:nth-last-child(-n + 3) { width: 13px; }
    .tray .on { background: #5a8fca; }
    .drop { width: 9px; display: flex; justify-content: center; }
    .label { padding: 0 2px; }
  `];
  render() {
    return html`
      <div class="tabs">${btn("menu")}<button class="model">Model</button><button class="layout">Layout1</button><span class="slash">/</span>${btn("plus")}<span class="slash">/</span></div>
      <div class="tray"><button class="label">MODEL</button>
        ${STATUS.map((s) => s === "v" ? html`<span class="drop"><span class="caret"></span></span>`
          : s[0] === "=" ? html`<button class="label">${s.slice(1)}</button>`
          : s[0] === "*" ? btn(s.slice(1), "on") : btn(s))}
      </div>`;
  }
}

@customElement("app-root")
class AppRoot extends LitElement {
  static styles = css`
    :host { display: grid; grid-template-rows: auto minmax(0, 1fr) auto; height: 100vh; box-sizing: border-box; padding: 12px 0; background: #000; font: 6px/8px "Open Sans", "Noto Sans", sans-serif; position: relative; overflow: hidden; }
    .main { display: grid; grid-template-columns: 144px 141px minmax(0, 1fr) 137px; gap: 2px; background: #3a4150; padding: 0 0 1px 1px; border-top: 1px solid #3a4150; min-height: 0; }
    .canvas { margin: 1px 0 0 -1px; }
    .edge { position: absolute; left: 0; top: 38px; bottom: 12px; width: 1px; background: linear-gradient(#b8bbc0 0 17px, #b52a3a 17px 39px, #c9ccd0 39px); }
    .marker { position: absolute; left: 0; top: 512px; width: 3px; height: 44px; background: #1b87c9; }
  `;
  render() {
    return html`
      <ix-ribbon></ix-ribbon>
      <main class="main">
        <ix-elements></ix-elements>
        <ix-properties></ix-properties>
        <ix-canvas class="canvas"></ix-canvas>
        <ix-articles></ix-articles>
      </main>
      <ix-status></ix-status>
      <span class="edge"></span><span class="marker"></span>
    `;
  }
}
